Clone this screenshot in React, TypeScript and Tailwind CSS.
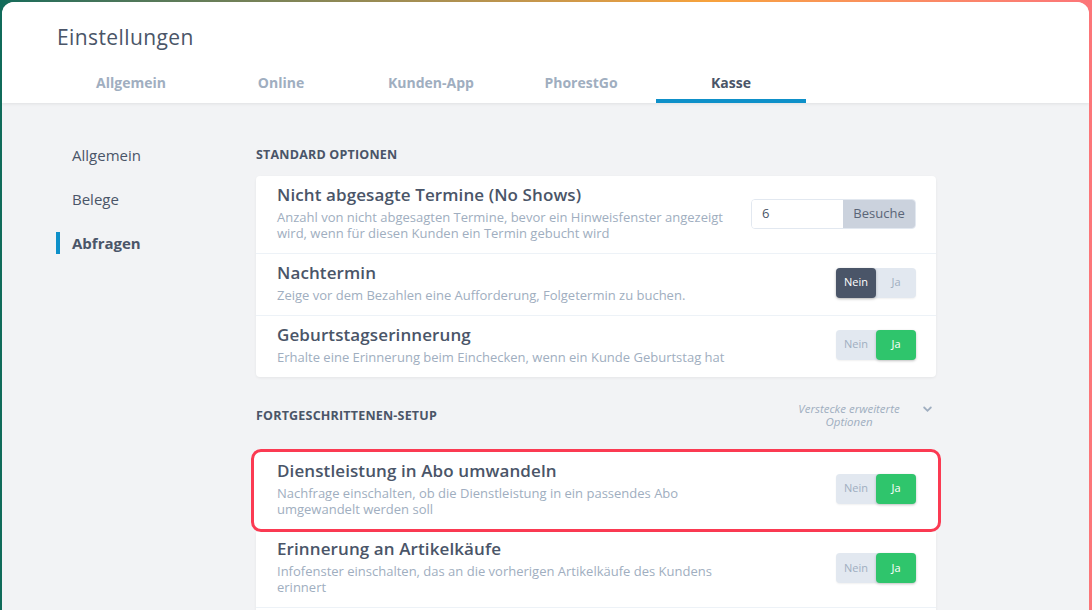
import React from "react";

const HEAD = { fontFamily: '"Open Sans", "Noto Sans", sans-serif' };
const BODY = { fontFamily: '"Open Sans", "Noto Sans", sans-serif' };

function Toggle({ value }: { value: "nein" | "ja" }) {
  return (
    <div className="flex h-[30px] w-[80px] rounded-[4px] bg-[#e2e8f0] text-[11px] shadow-[0_1px_2px_rgba(0,0,0,0.06)]" style={BODY}>
      <div
        className={
          "flex w-[40px] items-center justify-center rounded-[4px] " +
          (value === "nein" ? "bg-[#4a5568] text-white shadow-[0_1px_3px_rgba(0,0,0,0.25)]" : "text-[#a0aec0]")
        }
      >
        Nein
      </div>
      <div
        className={
          "flex w-[40px] items-center justify-center rounded-[4px] " +
          (value === "ja" ? "bg-[#2fc56c] text-white shadow-[0_1px_3px_rgba(0,0,0,0.2)]" : "text-[#a0aec0]")
        }
      >
        Ja
      </div>
    </div>
  );
}

function RowText({ title, lines }: { title: string; lines: string[] }) {
  return (
    <div>
      <div className="text-[17px] leading-[22px] font-semibold text-[#4a5568] tracking-[0.1px]" style={HEAD}>
        {title}
      </div>
      <div className="mt-[3px] text-[13px] leading-[16px] text-[#a0aec0]" style={BODY}>
        {lines.map((l, i) => (
          <div key={i}>{l}</div>
        ))}
      </div>
    </div>
  );
}

export default function App() {
  const tabs = ["Allgemein", "Online", "Kunden-App", "PhorestGo", "Kasse"];
  const nav = ["Allgemein", "Belege", "Abfragen"];
  return (
    <div className="h-[610px] w-[1092px] overflow-hidden bg-gradient-to-r from-[#0f6b5a] via-[#f7a23c] via-65% to-[#fc7579] pl-[2px] pr-[3px] pt-[2px]">
      <div className="flex h-full flex-col overflow-hidden rounded-t-[12px] bg-[#f2f3f5]">
        {/* header */}
        <div className="relative z-10 h-[101px] shrink-0 bg-white pl-[55px] pt-[21px] shadow-[0_1px_3px_rgba(0,0,0,0.08)]">
          <div className="text-[21px] leading-[28px] font-medium text-[#4a5568] tracking-[0.4px]" style={HEAD}>
            Einstellungen
          </div>
          <div className="-ml-[1px] mt-[14px] flex">
            {tabs.map((t) => (
              <div
                key={t}
                className={
                  "flex h-[38px] w-[150px] items-center justify-center border-b-4 text-[14px] font-bold " +
                  (t === "Kasse" ? "border-[#0e90c9] text-[#4a5568]" : "border-transparent text-[#a0aec0]")
                }
                style={HEAD}
              >
                {t}
              </div>
            ))}
          </div>
        </div>

        {/* body */}
        <div className="flex pl-[54px] pt-[41px]">
          <div className="flex w-[200px] shrink-0 flex-col gap-[22px]">
            {nav.map((n) => (
              <div
                key={n}
                className={
                  "flex h-[22px] items-center border-l-4 pl-[12px] text-[15px] " +
                  (n === "Abfragen" ? "border-[#0e90c9] font-bold text-[#4a5568]" : "border-transparent text-[#4a5568]")
                }
                style={HEAD}
              >
                {n}
              </div>
            ))}
          </div>

          <div className="w-[680px] shrink-0">
            <div className="mt-[3px] text-[12.5px] leading-[16px] font-bold tracking-[0.2px] text-[#4a5568]" style={HEAD}>
              STANDARD OPTIONEN
            </div>
            <div className="mt-[13px] rounded-[4px] bg-white shadow-[0_1px_3px_rgba(0,0,0,0.06)]">
              <div className="flex items-center justify-between border-b border-[#edf2f7] pb-[12px] pl-[21px] pr-[20px] pt-[8px]">
                <RowText
                  title="Nicht abgesagte Termine (No Shows)"
                  lines={[
                    "Anzahl von nicht abgesagten Termine, bevor ein Hinweisfenster angezeigt",
                    "wird, wenn für diesen Kunden ein Termin gebucht wird",
                  ]}
                />
                <div className="mt-[3px] flex h-[30px] w-[165px] overflow-hidden rounded-[4px] border border-[#e2e8f0] text-[13px]" style={BODY}>
                  <div className="flex flex-1 items-center bg-white pl-[10px] text-[#4a5568]">6</div>
                  <div className="flex w-[72px] items-center justify-center bg-[#cbd2dd] text-[#5a6577]">Besuche</div>
                </div>
              </div>
              <div className="flex items-center justify-between border-b border-[#edf2f7] pb-[12px] pl-[21px] pr-[20px] pt-[8px]">
                <RowText title="Nachtermin" lines={["Zeige vor dem Bezahlen eine Aufforderung, Folgetermin zu buchen."]} />
                <Toggle value="nein" />
              </div>
              <div className="flex items-center justify-between pb-[12px] pl-[21px] pr-[20px] pt-[8px]">
                <RowText
                  title="Geburtstagserinnerung"
                  lines={["Erhalte eine Erinnerung beim Einchecken, wenn ein Kunde Geburtstag hat"]}
                />
                <Toggle value="ja" />
              </div>
            </div>

            <div className="mt-[25px] flex h-[26px] items-start justify-between">
              <div className="pt-[6px] text-[12.5px] leading-[16px] font-bold tracking-[0.2px] text-[#4a5568]" style={HEAD}>
                FORTGESCHRITTENEN-SETUP
              </div>
              <div className="flex items-start">
                <div className="w-[124px] text-center text-[11.5px] leading-[13px] italic text-[#a0aec0]" style={HEAD}>
                  Verstecke erweiterte
                  <br />
                  Optionen
                </div>
                <svg className="ml-[12px] mr-[4px] mt-[4px]" width="9" height="7" viewBox="0 0 9 7">
                  <path d="M1.2 1.5 L4.5 4.8 L7.8 1.5" fill="none" stroke="#a0aec0" strokeWidth="1.8" strokeLinecap="round" />
                </svg>
              </div>
            </div>

            <div className="-mx-[5px] mt-[21px] flex items-center justify-between rounded-[10px] border-[3px] border-[#fb3a52] bg-white pb-[12px] pl-[23px] pr-[22px] pt-[8px]">
              <RowText
                title="Dienstleistung in Abo umwandeln"
                lines={["Nachfrage einschalten, ob die Dienstleistung in ein passendes Abo", "umgewandelt werden soll"]}
              />
              <Toggle value="ja" />
            </div>
            <div className="bg-white shadow-[0_1px_3px_rgba(0,0,0,0.06)]">
              <div className="flex items-center justify-between border-b border-[#edf2f7] pb-[12px] pl-[21px] pr-[20px] pt-[6px]">
                <RowText
                  title="Erinnerung an Artikelkäufe"
                  lines={["Infofenster einschalten, das an die vorherigen Artikelkäufe des Kundens", "erinnert"]}
                />
                <div className="mt-[3px]">
                  <Toggle value="ja" />
                </div>
              </div>
              <div className="h-[40px]" />
            </div>
          </div>
        </div>
      </div>
    </div>
  );
}
